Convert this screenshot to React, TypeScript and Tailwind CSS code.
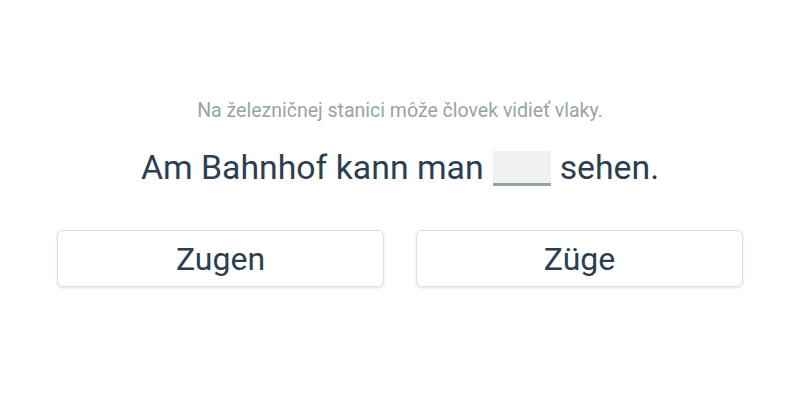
import React from "react";

export default function App() {
  return (
    <div
      className="w-[800px] h-[400px] bg-white flex flex-col items-center"
      style={{ fontFamily: "Roboto, 'Noto Sans', sans-serif" }}
    >
      <div className="mt-[99px] text-[19.5px] leading-[24px] text-[#95a5a6]">
        Na železničnej stanici môže človek vidieť vlaky.
      </div>
      <div className="mt-[25px] flex items-center text-[33.8px] leading-[40px] text-[#2c3e50]">
        <span>Am Bahnhof kann man</span>
        <span className="mx-[9px] inline-block w-[58px] h-[35px] bg-[#eef0f1] border-b-[3px] border-[#95a5a6]"></span>
        <span>sehen.</span>
      </div>
      <div className="mt-[42px] w-full px-[57px] grid grid-cols-2 gap-[32px]">
        <button className="h-[57px] rounded-[6px] border border-[#dcdfe0] bg-white shadow-[0_1px_3px_rgba(0,0,0,0.12)] text-[32px] text-[#2c3e50]">
          Zugen
        </button>
        <button className="h-[57px] rounded-[6px] border border-[#dcdfe0] bg-white shadow-[0_1px_3px_rgba(0,0,0,0.12)] text-[32px] text-[#2c3e50]">
          Züge
        </button>
      </div>
    </div>
  );
}
